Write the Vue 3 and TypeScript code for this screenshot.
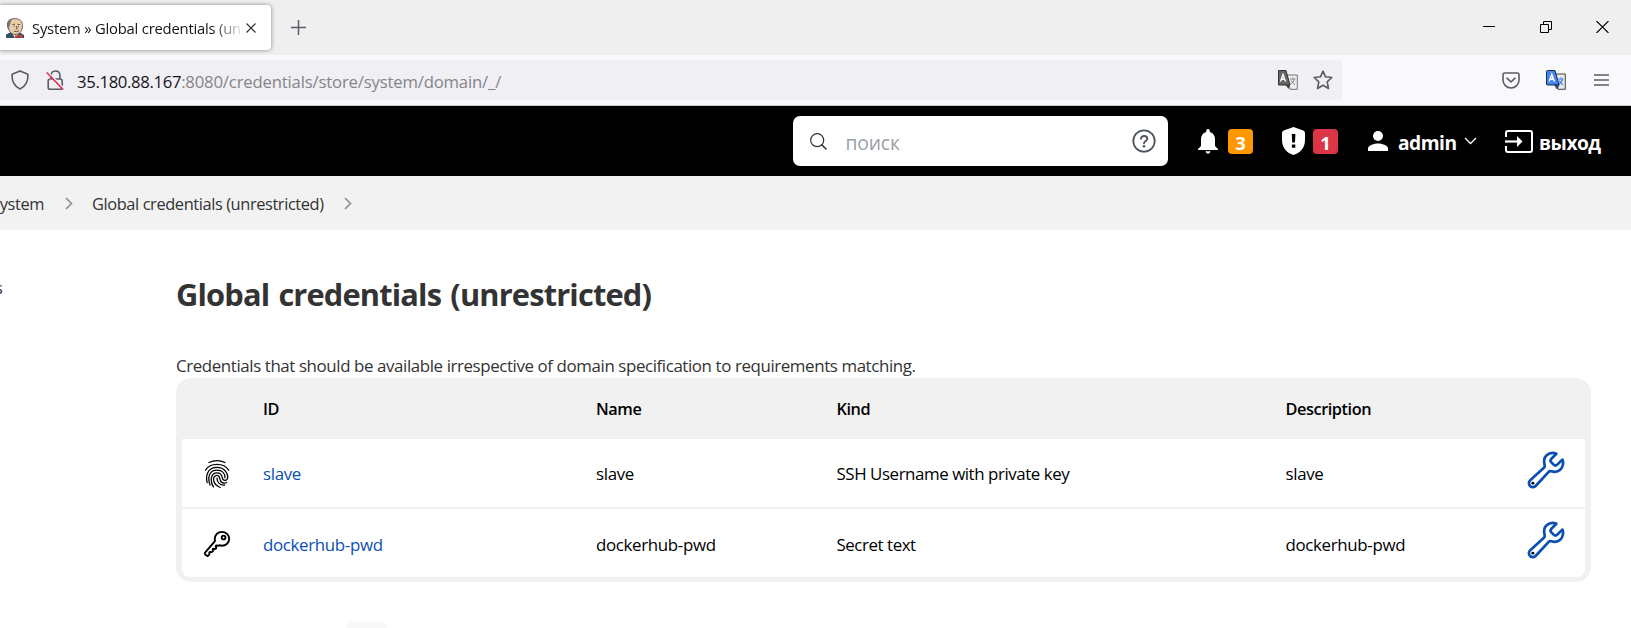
<script setup lang="ts">
interface Credential {
  id: string
  kind: string
  icon: 'fingerprint' | 'key'
}

const credentials: Credential[] = [
  { id: 'slave', kind: 'SSH Username with private key', icon: 'fingerprint' },
  { id: 'dockerhub-pwd', kind: 'Secret text', icon: 'key' },
]
</script>

<template>
  <div class="window">
    <div class="tabs">
      <div class="tab">
        <svg class="favicon" width="18" height="20" viewBox="0 0 18 20">
          <path d="M0 20V16.500L5 14L9 17L14 14.500L18 17V20Z" fill="#335061" />
          <path d="M6 15L9 20L13 15Z" fill="#fff" />
          <path d="M3 12C0 7 1 0.600 9 0.600C16 0.600 17.500 6 16 11C15 15 12 16.600 9 16.500C6 16.400 4 14.600 3 12Z" fill="#e8cda8" stroke="#4d4542" stroke-width=".8" />
          <path d="M2.600 12C-.4 7 1 1 7 .8C4 3 5 5 3.600 7.500Z" fill="#77706b" />
          <path d="M6.500 6.500L9 6.200M11.500 6.300L14 6.600M7.500 8.200H8.600M12 8.200H13M10.500 8L11.200 10.800L9.800 11M8 13.200Q10.500 14.300 13 12.800" stroke="#4d4542" stroke-width=".9" fill="none" />
          <path d="M9 17L12 18L16 16.200L16.500 20L12.500 19L9 20Z" fill="#e03a35" />
        </svg>
        <span class="tab-title">System » Global credentials (unrestricted)</span>
        <svg class="tab-close" width="10" height="10" viewBox="0 0 10 10"><path d="M.5 .5L9.500 9.500M9.500 .5L.5 9.500" stroke="#333" stroke-width="1.200" /></svg>
      </div>
      <svg class="new-tab" width="15" height="15" viewBox="0 0 15 15"><path d="M7.500 0V15M0 7.500H15" stroke="#5b5b66" stroke-width="1.500" /></svg>
      <div class="controls">
        <svg width="12" height="12" viewBox="0 0 12 12"><path d="M0 5.500H12" stroke="#000" /></svg>
        <svg width="12" height="12" viewBox="0 0 12 12"><path d="M.5 3.500H8.500V11.500H.5ZM3.500 3.500V.5H11.500V8.500H8.500" fill="none" stroke="#000" /></svg>
        <svg width="13" height="12" viewBox="0 0 13 12"><path d="M.5 0L12.500 12M12.500 0L.5 12" stroke="#000" stroke-width="1.100" /></svg>
      </div>
    </div>

    <div class="toolbar">
      <div class="urlbar">
        <svg class="shield" width="18" height="20" viewBox="0 0 18 20"><path d="M9 1L16.300 4.100Q17 4.400 17 5.300C17 12 14.500 16.500 9 19C3.500 16.500 1 12 1 5.300Q1 4.400 1.700 4.100Z" fill="none" stroke="#5b5b66" stroke-width="1.600" stroke-linejoin="round" /></svg>
        <svg class="lock" width="19" height="21" viewBox="0 0 19 21">
          <path d="M5 9V6Q5 1 9.500 1T14 6V9M5 9H14Q16.200 9 16.200 11V17.500Q16.200 19.300 14.400 19.300H4Q2.200 19.300 2.200 17.500V11Q2.200 9 4.500 9" fill="none" stroke="#5b5b66" stroke-width="1.600" />
          <path d="M1.500 2L18 19" stroke="#f0eff4" stroke-width="2" />
          <path d="M.7 2.500L17.200 19.500" stroke="#e22850" stroke-width="1.500" />
        </svg>
        <div class="url"><span class="host">35.180.88.167</span><span class="path">:8080/credentials/store/system/domain/_/</span></div>
        <svg class="translate" width="20" height="20" viewBox="0 0 20 20">
          <path d="M9 5H19.300V19.300H12Z" fill="#eee" stroke="#777" />
          <path d="M12 9H17.500M14.800 7.500V9M16.500 9Q15.500 13 12.500 14M13 10.500Q15 13 17 15" stroke="#888" fill="none" />
          <path d="M.5 .5H8L12 15H.5Z" fill="#666" stroke="#333" />
          <path d="M2.500 11.500L5 4.500L7.500 11.500M3.300 9.300H6.700" fill="none" stroke="#fff" stroke-width="1.400" />
          <path d="M7.500 15H12L10.500 19Z" fill="#444" />
        </svg>
        <svg class="star" width="20" height="20" viewBox="0 0 20 20"><path d="M10 1.200L12.500 6.800L18.800 7.500L14.200 11.800L15.500 18.500L10 15.200L4.500 18.500L5.800 11.800L1.200 7.500L7.500 6.800Z" fill="none" stroke="#5b5b66" stroke-width="1.600" stroke-linejoin="round" /></svg>
      </div>
      <svg class="pocket" width="18" height="17" viewBox="0 0 18 17"><path d="M2.700 1H15.300Q17 1 17 2.700V8A8 8 0 0 1 1 8V2.700Q1 1 2.700 1ZM5 6.200L9 10L13 6.200" fill="none" stroke="#5b5b66" stroke-width="1.600" stroke-linecap="round" stroke-linejoin="round" /></svg>
      <svg class="translate-ext" width="20" height="20" viewBox="0 0 20 20">
        <path d="M9 4H19.300V19.300H12Z" fill="#e8e8e8" stroke="#444" />
        <path d="M12 9H17.500M14.800 7.500V9M16.500 9Q15.500 13 12.500 14M13 10.500Q15 13 17 15" stroke="#4285f4" stroke-width="1.200" fill="none" />
        <path d="M1.500 .5H9L13 15H1.500Q.5 15 .5 14V1.500Q.5 .5 1.500 .5Z" fill="#4285f4" stroke="#222b44" />
        <path d="M3.200 11.500L5.800 4.500L8.400 11.500M4.200 9.300H7.500" fill="none" stroke="#fff" stroke-width="1.500" />
        <path d="M8.500 15H13L11 19Z" fill="#1c50a8" stroke="#222b44" stroke-width=".6" />
      </svg>
      <svg class="menu" width="15" height="12" viewBox="0 0 15 12"><path d="M0 1H15M0 6H15M0 11H15" stroke="#5b5b66" stroke-width="1.500" /></svg>
    </div>

    <header class="header">
      <div class="search">
        <svg width="17" height="17" viewBox="0 0 17 17"><circle cx="7.200" cy="7.200" r="6.500" fill="none" stroke="#333" stroke-width="1.200" /><path d="M12 12L16 16" stroke="#333" stroke-width="1.600" stroke-linecap="round" /></svg>
        <span class="placeholder">поиск</span>
        <svg class="help" width="24" height="24" viewBox="0 0 24 24"><circle cx="12" cy="12" r="10.700" fill="none" stroke="#4d545d" stroke-width="1.800" /><path d="M9 9.800C9 5.900 15.300 6.200 15.300 9.700C15.300 12 12 11.900 12 14.300" fill="none" stroke="#4d545d" stroke-width="1.900" stroke-linecap="round" /><circle cx="12" cy="17.300" r="1.300" fill="#4d545d" /></svg>
      </div>
      <svg class="bell" width="20" height="25" viewBox="0 0 20 25"><path d="M10 0Q11.800 0 11.800 2V3Q17 4.500 17 10.500V17L20 20V21H0V20L3 17V10.500Q3 4.500 8.200 3V2Q8.200 0 10 0ZM7.500 22.300H12.500Q12.300 24.700 10 24.700T7.500 22.300Z" fill="#fff" /></svg>
      <span class="badge warning">3</span>
      <svg class="alert" width="23" height="28" viewBox="0 0 23 28"><path d="M11.500 0L21.300 3.600Q23 4.200 23 6V13C23 21 18 26 11.500 28C5 26 0 21 0 13V6Q0 4.200 1.700 3.600Z" fill="#fff" /><path d="M9.800 7H13.400L13 15.500H10.200ZM9.900 17.500H13.300V20.800H9.900Z" fill="#000" /></svg>
      <span class="badge danger">1</span>
      <svg class="person" width="20" height="20" viewBox="0 0 20 20"><circle cx="10" cy="5" r="5" fill="#fff" /><path d="M0 20V17.500C0 14.200 6.500 12.500 10 12.500S20 14.200 20 17.500V20Z" fill="#fff" /></svg>
      <span class="user">admin</span>
      <svg class="caret" width="13" height="8" viewBox="0 0 13 8"><path d="M1 1L6.500 6.500L12 1" fill="none" stroke="#fff" stroke-width="1.300" /></svg>
      <svg class="exit" width="28" height="23" viewBox="0 0 28 23"><path d="M1 7V3Q1 1 3 1H25Q27 1 27 3V20Q27 22 25 22H3Q1 22 1 20V16" fill="none" stroke="#fff" stroke-width="2" /><path d="M0 11.500H14" stroke="#fff" stroke-width="2.200" /><path d="M12 6L17.500 11.500L12 17Z" fill="#fff" /></svg>
      <span class="logout">выход</span>
    </header>

    <nav class="crumbs">
      <span class="crumb first">System</span>
      <svg width="8" height="13" viewBox="0 0 8 13"><path d="M1 1L6.500 6.500L1 12" fill="none" stroke="#909090" stroke-width="1.700" /></svg>
      <span class="crumb page">Global credentials (unrestricted)</span>
      <svg width="8" height="13" viewBox="0 0 8 13"><path d="M1 1L6.500 6.500L1 12" fill="none" stroke="#909090" stroke-width="1.700" /></svg>
    </nav>

    <div class="body">
      <aside class="side"><span>s</span></aside>
      <main class="main">
        <h1>Global credentials (unrestricted)</h1>
        <p class="intro">Credentials that should be available irrespective of domain specification to requirements matching.</p>
        <div class="table">
          <div class="row head">
            <span></span><span>ID</span><span>Name</span><span>Kind</span><span>Description</span><span></span>
          </div>
          <div v-for="c in credentials" :key="c.id" class="row">
            <svg v-if="c.icon === 'fingerprint'" class="kind-icon print" width="30" height="30" viewBox="0 0 512 512">
              <path d="M118 60C200 20 310 20 392 60M60 190C140 60 370 60 456 190M88 404C62 300 84 144 256 144C390 144 445 250 438 320C432 376 358 380 347 322C341 285 320 236 256 236C150 236 130 380 196 474M138 446C90 320 120 190 256 190C350 190 392 250 392 320M310 486C170 430 170 280 256 280C300 280 298 310 305 345C315 400 370 430 420 400M256 326C255 400 310 452 385 444" />
            </svg>
            <svg v-else class="kind-icon key" width="30" height="30" viewBox="0 0 512 512">
              <path d="M218.1 167.17c0 13 0 25.6 4.1 37.4-43.1 50.6-156.9 184.3-167.5 194.5a20.17 20.17 0 00-6.7 15c0 8.5 5.2 16.7 9.6 21.3 6.6 6.9 34.8 33 40 28 15.4-15 18.5-19 24.8-25.2 9.500-9.300-1-28.300 2.300-36s6.800-9.200 12.500-10.400 15.800 2.900 23.700 3c8.300.1 12.800-3.400 19-9.200 5-4.600 8.600-8.900 8.700-15.600.2-9-12.800-20.900-3.100-30.400s23.700 6.200 34 5 22.800-15.500 24.100-21.600-11.700-21.800-9.700-30.700c.7-3 6.800-10 11.400-11s25 6.900 29.600 5.900c5.600-1.200 12.100-7.100 17.400-10.400 15.500 6.700 29.600 9.400 47.700 9.400 68.500 0 124-53.400 124-119.200S408.500 48 340 48s-121.900 53.370-121.900 119.170zM400 144a32 32 0 11-32-32 32 32 0 0132 32z" />
            </svg>
            <a class="link">{{ c.id }}</a>
            <span>{{ c.id }}</span>
            <span class="kind">{{ c.kind }}</span>
            <span>{{ c.id }}</span>
            <svg class="wrench" width="42" height="42" viewBox="0 0 512 512">
              <path d="M393.87 190a32.1 32.1 0 01-45.25 0l-26.57-26.57a32.09 32.09 0 010-45.26L382.19 58a1 1 0 00-.3-1.64c-38.82-16.64-89.15-8.16-121.11 23.57-30.58 30.35-32.32 76-21.12 115.84a31.93 31.93 0 01-9.06 32.08L64 380a48.17 48.17 0 1068 68l153.86-167a31.93 31.93 0 0131.6-9.13c39.54 10.59 84.54 8.6 114.72-21.19 32.49-32 39.5-88.56 23.75-120.93a1 1 0 00-1.6-.26z" />
              <circle cx="96" cy="416" r="18" />
            </svg>
          </div>
        </div>
        <div class="size-switch"></div>
      </main>
    </div>
  </div>
</template>

<style>
body { background: #fff; overflow: hidden; }
</style>

<style scoped>
.window {
  width: 1631px;
  height: 628px;
  overflow: hidden;
  display: flex;
  flex-direction: column;
  background: #fff;
  color: #333;
  font-family: "Open Sans", "Noto Sans", sans-serif;
  white-space: nowrap;
}
svg { display: block; flex: none; }

.tabs { height: 55px; flex: none; display: flex; align-items: flex-start; background: #efefef; }
.tab {
  width: 271px; height: 45px; margin-top: 5px; box-sizing: border-box; padding-left: 6px;
  display: flex; align-items: center; background: #fff; border-radius: 0 4px 4px 0;
  box-shadow: 0 0 4px rgba(0, 0, 0, .45);
}
.tab-title {
  width: 211px; margin-left: 8px; overflow: hidden; color: #15141a; font-size: 14.8px; letter-spacing: -.21px;
  -webkit-mask-image: linear-gradient(to right, #000 180px, transparent 213px);
  mask-image: linear-gradient(to right, #000 180px, transparent 213px);
}
.tab-close { margin-left: 3px; }
.new-tab { margin: 20px 0 0 20px; }
.controls { margin: 21px 22px 0 auto; display: flex; gap: 45px; }
.controls svg:last-child { margin-left: -1px; }

.toolbar { height: 50px; flex: none; display: flex; align-items: center; background: #f9f9fb; border-bottom: 1px solid #c4c8c6; }
.urlbar { width: 1342px; height: 40px; box-sizing: border-box; padding: 0 9px 0 11px; display: flex; align-items: center; background: #f0eff4; border-radius: 4px; }
.lock { margin-left: 17px; }
.url { margin: 3px auto 0 12px; font-size: 16.7px; line-height: 24px; }
.host { color: #15141a; letter-spacing: -.34px; }
.path { color: #858489; letter-spacing: -.17px; }
.star { margin-left: 15px; }
.pocket { margin-left: 160px; }
.translate-ext { margin-left: 26px; }
.menu { margin-left: 28px; }

.header { height: 70px; flex: none; display: flex; align-items: center; background: #000; color: #fff; font-weight: 700; }
.search { width: 375px; height: 50px; margin-left: 793px; box-sizing: border-box; padding: 0 12.500px 0 16.500px; display: flex; align-items: center; background: #fff; border-radius: 7px; }
.placeholder { margin: 3px auto 0 19px; color: #9b9fa8; font-size: 19.3px; font-weight: 400; letter-spacing: -.15px; }
.bell { margin-left: 30px; }
.badge { width: 25px; height: 25px; border-radius: 4px; font-size: 18.5px; line-height: 28px; text-align: center; }
.warning { margin-left: 10px; background: #ff9800; }
.danger { margin-left: 8px; background: #dc3545; }
.alert { margin-left: 29px; }
.person { margin-left: 30px; }
.user { margin: 3px 0 0 10px; width: 60px; font-size: 19.2px; letter-spacing: -.5px; }
.caret { margin-left: 6px; }
.exit { margin-left: 28px; }
.logout { margin: 3px 0 0 6px; font-size: 19.2px; letter-spacing: -.5px; }

.crumbs { height: 54px; flex: none; display: flex; align-items: center; background: #f2f2f2; font-size: 16.4px; letter-spacing: -.4px; }
.first { width: 44px; display: flex; justify-content: flex-end; }
.crumbs svg { margin-left: 20.500px; }
.crumb { margin-top: 1px; }
.page { margin-left: 19.500px; width: 232px; }
.crumbs .page + svg { margin-left: 20px; }

.body { flex: 1; display: flex; }
.side { width: 176px; padding-top: 47px; box-sizing: border-box; font-size: 16.3px; }
.side span { display: block; margin-left: -5px; }
.main { width: 1415px; }
h1 { margin: 42px 0 0; font-size: 30.8px; line-height: 44px; letter-spacing: -.84px; word-spacing: 2px; font-weight: 700; }
.intro { margin: 38px 0 0; font-size: 16.9px; line-height: 24px; letter-spacing: -.4px; }
.table { box-sizing: border-box; height: 204px; padding: 0 6px 5px; display: flex; flex-direction: column; background: #f1f1f1; border-radius: 15px; overflow: hidden; }
.row {
  height: 68px; box-sizing: border-box; padding-left: 20px; display: grid; align-items: center;
  grid-template-columns: 61px 333px 240.5px 449px 239.500px 42px;
  background: #fff; color: #000; font-size: 16.9px; letter-spacing: -.34px;
}
.row + .row + .row { margin-top: 2px; border-radius: 0 0 8px 8px; }
.head { height: 61px; background: transparent; font-size: 16.3px; font-weight: 600; letter-spacing: -.42px; }
.row > span, .row > a { padding-top: 0; }
.kind { letter-spacing: -.44px; }
.row + .row + .row > span, .row + .row + .row > a { padding-top: 2px; }
.link { color: #0b4fb5; }
.kind-icon { margin-top: 1px; }
.kind-icon path { fill: none; stroke: #000; stroke-linecap: round; stroke-linejoin: round; }
.print path { stroke-width: 22; }
.key path { stroke-width: 32; }
.wrench { margin-top: -7px; }
.wrench path { fill: none; stroke: #0b4fb5; stroke-width: 33; stroke-linecap: round; stroke-linejoin: round; }
.size-switch { width: 40px; height: 20px; margin: 40px 0 0 171px; background: #f8f8f8; border-radius: 5px; }
</style>
